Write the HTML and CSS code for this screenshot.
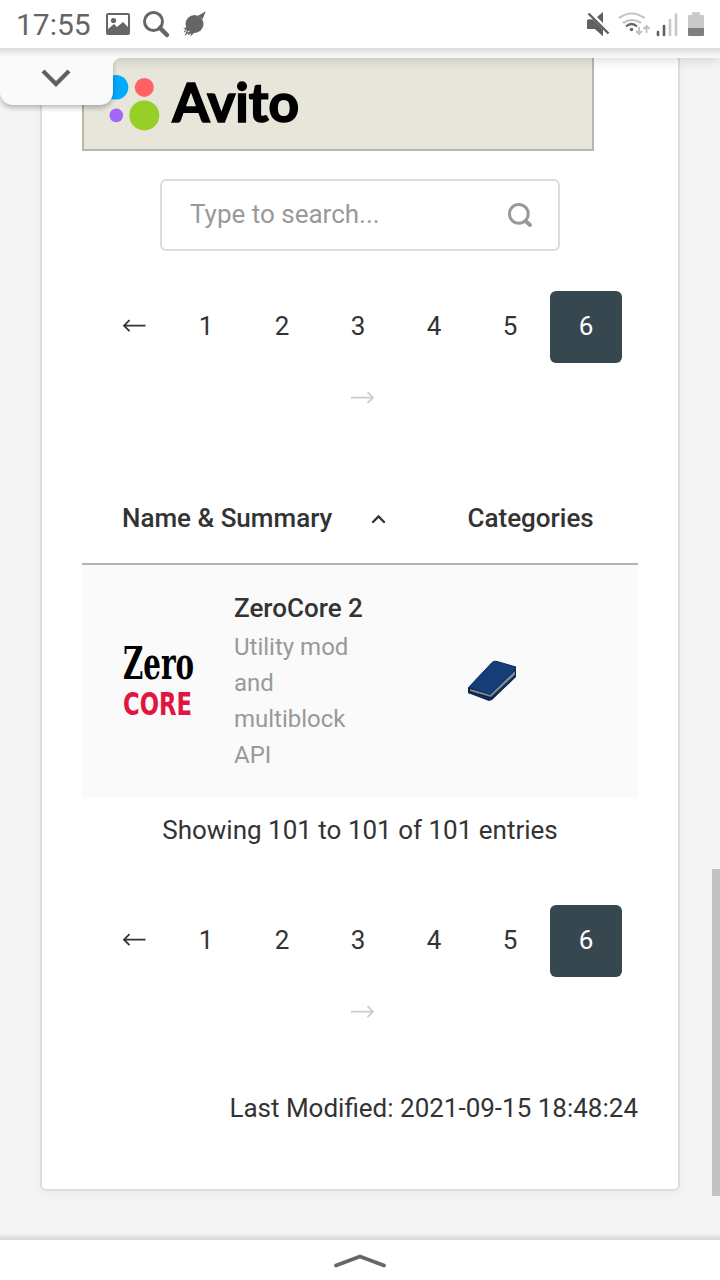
FILE: index.html
```html
<!DOCTYPE html>
<html lang="en">
<head>
<meta charset="utf-8">
<title>Mod list</title>
<link rel="stylesheet" href="styles.css">
</head>
<body>
<div class="screen">
  <header class="status">
    <span class="clock">17:55</span>
    <svg class="status-icons" width="110" height="48" viewBox="100 0 110 48">
      <path fill="#666" fill-rule="evenodd" d="M108 13h20q2 0 2 2v18q0 2-2 2h-20q-2 0-2-2V15q0-2 2-2zm0 2v14l6-5 3 3 6-5 5 5V15z"/>
      <circle cx="113.5" cy="20.500" r="2.600" fill="#666"/>
      <circle cx="153.500" cy="21.500" r="9" fill="none" stroke="#666" stroke-width="3"/>
      <path d="M160 28l7 7" stroke="#666" stroke-width="4.500" stroke-linecap="round"/>
      <circle cx="194.500" cy="24" r="9" fill="#666"/>
      <path fill="#666" d="M205.800 11.300l-3.300 8-4.500-3.500zM187 27l-4 1.500 2.500.5-2 3.500 2.500-.5-1.500 4 4-3-.5 2.500 3-2-.5 3 4-4z"/>
      <path d="M184.500 34l2-4M187.500 32l2-1" stroke="#fff" stroke-width="1"/>
    </svg>
    <svg class="status-signals" width="140" height="48" viewBox="580 0 140 48">
      <path fill="#606060" d="M588.500 19.500h6l8.500 9v7.500l-8-7h-6.500q-1.500 0-1.500-1.500v-6.500q0-1.500 1.500-1.500zM597 17l6-5v11z"/>
      <path d="M588.500 13.500l20 20" stroke="#fff" stroke-width="5"/>
      <path fill="#606060" d="M587 21q0-1.500 1.500-1.500H593l10 10V36l-8-7h-6.500q-1.500 0-1.500-1.500z"/>
      <path d="M588.500 13.500l20 20" stroke="#606060" stroke-width="2.400"/>
      <path d="M619 18q12.500-9 25.500 0M623 23q9-6 18 0" fill="none" stroke="#c4c4c4" stroke-width="2.200"/>
      <path d="M626 26.500q5.500-5 11 0" fill="none" stroke="#666" stroke-width="2.200"/>
      <circle cx="631.500" cy="29.500" r="1.800" fill="#666"/>
      <path d="M639 27v7m-3-3l3 3 3-3M646.500 33v-7m-3 3l3-3 3 3" fill="none" stroke="#c0c0c0" stroke-width="1.800"/>
      <path d="M658 32v3M664 26v9" stroke="#606060" stroke-width="2.600" stroke-linecap="round"/>
      <path d="M670 20v15M676 14.500v20.500" stroke="#c8c8c8" stroke-width="2.600" stroke-linecap="round"/>
      <path fill="#cacaca" d="M692 15v-2q0-1 1-1h6q1 0 1 1v2h3q1 0 1 1v12h-16V16q0-1 1-1z"/>
      <path fill="#7e7e7e" d="M688 28h16v7q0 1-1 1h-14q-1 0-1-1z"/>
    </svg>
  </header>

  <main class="page">
    <div class="toolbar-edge"></div>
    <button class="pull-tab" aria-label="Expand">
      <svg width="32" height="20" viewBox="0 0 32 20"><path d="M3 3l13 13L29 3" fill="none" stroke="#606060" stroke-width="4.200"/></svg>
    </button>
    <section class="card">
      <div class="banner">
        <svg width="230" height="91" viewBox="84 58 230 91">
          <circle cx="116" cy="87.300" r="12.300" fill="#00aaff"/>
          <circle cx="144.300" cy="87.400" r="9.500" fill="#ff6163"/>
          <circle cx="116.300" cy="115.400" r="6.800" fill="#a169f7"/>
          <circle cx="144.300" cy="115.400" r="15" fill="#97cf26"/>
          <text class="avito" x="172.500" y="121.800" textLength="126.500" lengthAdjust="spacingAndGlyphs">Avito</text>
        </svg>
      </div>

      <div class="search">
        <span>Type to search...</span>
        <svg width="28" height="28" viewBox="0 0 28 28"><circle cx="12.800" cy="12.800" r="9.400" fill="none" stroke="#999" stroke-width="3"/><path d="M19.500 20l4.500 4" stroke="#999" stroke-width="4" stroke-linecap="round"/></svg>
      </div>

      <nav class="pager">
        <span class="prev"><svg width="24" height="14" viewBox="0 0 24 14"><path d="M23.500 6.700H1.500M7.500 1.200L2 6.700l5.500 5.500" fill="none" stroke="currentColor" stroke-width="1.800"/></svg></span>
        <span>1</span><span>2</span><span>3</span><span>4</span><span>5</span><span class="current">6</span>
        <span class="next"><svg width="24" height="14" viewBox="0 0 24 14"><path d="M0 6.700h22M16.500 1.200L22 6.700l-5.500 5.500" fill="none" stroke="currentColor" stroke-width="1.800"/></svg></span>
      </nav>

      <div class="table">
        <div class="thead">
          <span class="name-head">Name &amp; Summary
            <svg width="16" height="10" viewBox="0 0 16 10"><path d="M2 8l5.500-5.500L13 8" fill="none" stroke="#333" stroke-width="2.400" stroke-linecap="round"/></svg>
          </span>
          <span>Categories</span>
        </div>
        <div class="row">
          <svg class="mod-logo" width="72" height="72" viewBox="122 645 72 72">
            <text class="zero" x="123" y="679" textLength="71" lengthAdjust="spacingAndGlyphs">Zero</text>
            <text class="core" x="123" y="714.500" textLength="69" lengthAdjust="spacingAndGlyphs">CORE</text>
          </svg>
          <div class="summary">
            <strong>ZeroCore 2</strong>
            <p>Utility mod and multiblock API</p>
          </div>
          <svg class="book" width="48" height="48" viewBox="468 657 48 48">
            <path fill="#0b2145" d="M468 688l48-19v8l-24 23-3 1-21-8z"/>
            <path fill="#7f8790" d="M470 689l20 5 25-23v4l-24 22-21-6z"/>
            <path fill="#153d78" stroke="#0b2956" stroke-width="1" d="M468.500 687.500L492 662.500q2-2 5-1l19 5.500q0 2-2 4l-24 23.500z"/>
            <path d="M469 692.500l21 6.500 26-24" fill="none" stroke="#102f61" stroke-width="1.600"/>
          </svg>
        </div>
      </div>

      <p class="showing">Showing 101 to 101 of 101 entries</p>

      <nav class="pager">
        <span class="prev"><svg width="24" height="14" viewBox="0 0 24 14"><path d="M23.500 6.700H1.500M7.500 1.200L2 6.700l5.500 5.500" fill="none" stroke="currentColor" stroke-width="1.800"/></svg></span>
        <span>1</span><span>2</span><span>3</span><span>4</span><span>5</span><span class="current">6</span>
        <span class="next"><svg width="24" height="14" viewBox="0 0 24 14"><path d="M0 6.700h22M16.500 1.200L22 6.700l-5.500 5.500" fill="none" stroke="currentColor" stroke-width="1.800"/></svg></span>
      </nav>

      <p class="modified">Last Modified: 2021-09-15 18:48:24</p>
    </section>
    <div class="scrollbar"></div>
    <div class="bottom-shade"></div>
  </main>

  <footer class="handle">
    <svg width="52" height="14" viewBox="0 0 52 14"><path d="M2 11.500l24-9 24 9" fill="none" stroke="#666" stroke-width="3.600" stroke-linecap="round"/></svg>
  </footer>
</div>
</body>
</html>
```
FILE: styles.css
```css
* { box-sizing: border-box; }
body { margin: 0; font: 26px/36px Roboto, sans-serif; color: #333; }
p { margin: 0; }
svg { display: block; flex: none; }
.screen { width: 720px; height: 1280px; display: flex; flex-direction: column; overflow: hidden; background: #fff; }
.status { height: 48px; flex: none; display: flex; align-items: center; }
.clock { width: 100px; padding: 2px 0 0 16px; font-size: 30px; color: #666; white-space: nowrap; }
.status-signals { margin-left: auto; }
.page { position: relative; height: 1192px; flex: none; padding: 10px 40px 0; background: #f4f4f4; overflow: hidden; }
.toolbar-edge { position: absolute; z-index: 2; inset: 0 0 auto; height: 10px; background: linear-gradient(#d9d9d9, #f2f2f2 60%, #fafafa); box-shadow: 0 1px 12px rgba(0, 0, 0, .19); }
.pull-tab { position: absolute; z-index: 3; top: 10px; left: 0; width: 113px; height: 47px; padding: 0 2px 0 0; border: 0; border-radius: 0 0 13px 13px; background: #fafafa; display: flex; align-items: center; justify-content: center; box-shadow: 0 3px 5px rgba(0, 0, 0, .25); clip-path: inset(0 -12px -12px 0); }
.pull-tab::after { content: ""; position: absolute; top: 0; left: 113px; width: 8px; height: 8px; background: radial-gradient(circle at 100% 100%, transparent 7.5px, #fafafa 8.5px); }
.pull-tab svg { margin-top: -7px; }
.card { height: 1133px; padding: 0 40px; background: #fff; border: 2px solid #dcdddd; border-top: 0; border-radius: 0 0 6px 6px; box-shadow: 0 3px 8px rgba(0, 0, 0, .04); }
.banner { width: 512px; height: 93px; border: solid #b9b6ac; border-width: 0 2px 2px; background: #e8e5db; }
.avito { font: 700 53px Lato, sans-serif; stroke: #000; stroke-width: 1.6px; }
.search { width: 400px; height: 72px; margin: 28px auto 40px; padding: 0 24px 2px 28px; border: 2px solid #dcdcdc; border-radius: 6px; display: flex; align-items: center; justify-content: space-between; color: #999; }
.search svg { margin-top: 2px; }
.pager { padding: 0 16px; display: flex; flex-wrap: wrap; column-gap: 4px; }
.pager span { width: 72px; height: 72px; padding-bottom: 2px; display: flex; align-items: center; justify-content: center; border-radius: 6px; }
.pager .prev { margin-right: -4px; }
.pager .next { width: 100%; padding-left: 6px; color: #ccc; }
.pager .current { background: #37474f; color: #fff; }
.table { margin-top: 36px; }
.thead { height: 94px; padding: 2px 40px 0; border-bottom: 2px solid #b3b3b3; display: grid; grid-template-columns: 345.500px 1fr; align-items: center; font-weight: 500; }
.name-head { display: flex; align-items: center; gap: 39px; }
.name-head svg { margin-top: 2px; }
.row { height: 232px; padding: 24px 40px; background: #fafafa; display: grid; grid-template-columns: 112px 234px 48px; }
.summary { width: 130px; font-size: 24px; color: #999; }
.summary strong { display: block; height: 40px; line-height: 38px; font-size: 26px; font-weight: 500; color: #333; white-space: nowrap; }
.mod-logo, .book { align-self: center; }
.mod-logo { overflow: visible; }
.zero { font: condensed 700 44px "DejaVu Serif Condensed", "DejaVu Serif", serif; fill: #000; }
.core { font: condensed 700 32px "DejaVu Sans Condensed", "DejaVu Sans", sans-serif; fill: #e01542; }
.showing { margin: 15px 0 57px; text-align: center; }
.modified { margin-top: 41px; text-align: right; }
.scrollbar { position: absolute; right: 0; top: 821px; width: 8px; height: 327px; background: #c2c2c2; }
.bottom-shade { position: absolute; inset: auto 0 0; height: 7px; background: linear-gradient(rgba(0, 0, 0, 0), rgba(0, 0, 0, .13)); }
.handle { height: 40px; flex: none; padding-top: 14px; display: flex; justify-content: center; background: #fff; }
```
